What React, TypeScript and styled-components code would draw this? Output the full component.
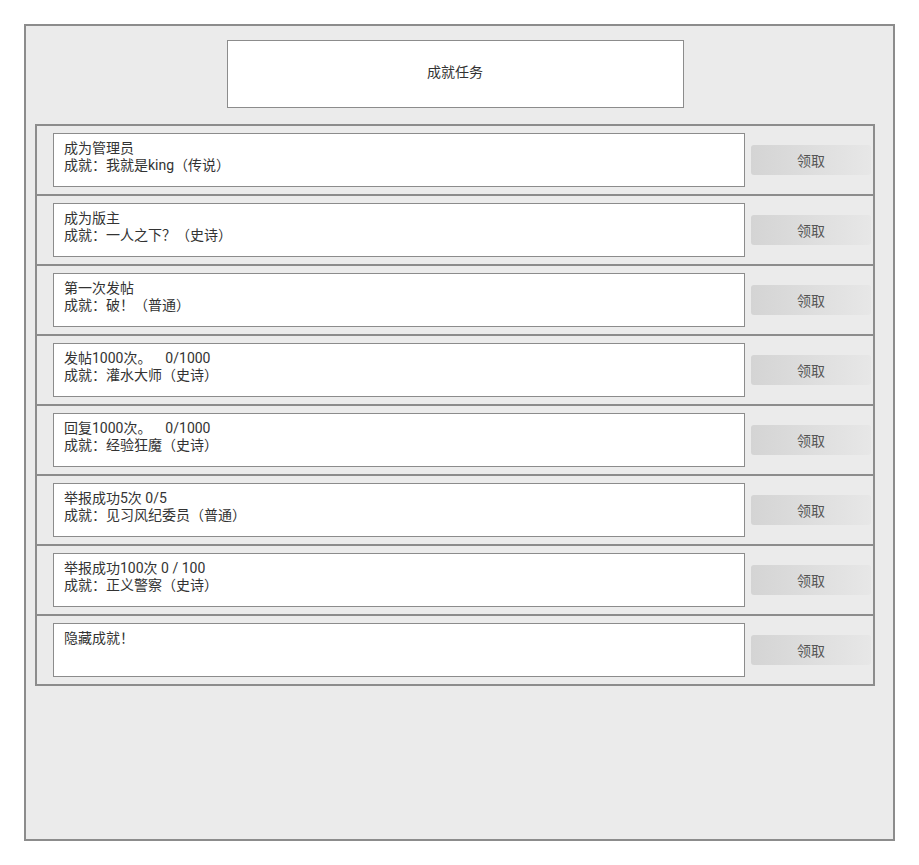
import React from "react";
import styled, { createGlobalStyle } from "styled-components";

const GlobalStyle = createGlobalStyle`
  html, body {
    margin: 0;
    padding: 0;
    background: #ffffff;
  }
  body {
    font-family: Roboto, "Noto Sans CJK SC", sans-serif;
    font-size: 14px;
    color: #333333;
  }
`;

const Page = styled.div`
  padding: 24px;
`;

const Frame = styled.div`
  box-sizing: border-box;
  width: 871px;
  height: 817px;
  border: 2px solid #8c8c8c;
  background: #ebebeb;
  padding: 14px 0 0 9px;
`;

const Column = styled.div`
  width: 840px;
  display: flex;
  flex-direction: column;
  align-items: center;
  gap: 16px;
`;

const TitleBox = styled.div`
  box-sizing: border-box;
  width: 457px;
  height: 68px;
  border: 1px solid #8c8c8c;
  background: #ffffff;
  display: flex;
  align-items: center;
  justify-content: center;
  padding-bottom: 7px;
  font-size: 14px;
  color: #333333;
`;

const List = styled.div`
  box-sizing: border-box;
  width: 840px;
  border: 2px solid #8c8c8c;
  display: flex;
  flex-direction: column;
`;

const Row = styled.div`
  box-sizing: border-box;
  height: 70px;
  padding: 7px 2px 7px 16px;
  display: flex;
  align-items: center;
  gap: 6px;
  border-bottom: 2px solid #8c8c8c;
  &:last-child {
    height: 68px;
    border-bottom: none;
  }
`;

const TextBox = styled.div`
  box-sizing: border-box;
  width: 692px;
  height: 54px;
  border: 1px solid #8c8c8c;
  background: #ffffff;
  padding: 6px 10px;
  line-height: 17px;
  font-size: 14px;
  color: #333333;
  white-space: pre;
`;

const ClaimButton = styled.button`
  box-sizing: border-box;
  width: 120px;
  height: 30px;
  border: none;
  border-radius: 3px;
  background: linear-gradient(to right, #d4d4d4, #e7e7e7);
  color: #555555;
  font-family: Roboto, "Noto Sans CJK SC", sans-serif;
  font-size: 14px;
  padding: 0;
  cursor: pointer;
`;

const tasks: string[][] = [
  ["成为管理员", "成就：我就是king（传说）"],
  ["成为版主", "成就：一人之下？（史诗）"],
  ["第一次发帖", "成就：破！（普通）"],
  ["发帖1000次。    0/1000", "成就：灌水大师（史诗）"],
  ["回复1000次。    0/1000", "成就：经验狂魔（史诗）"],
  ["举报成功5次 0/5", "成就：见习风纪委员（普通）"],
  ["举报成功100次 0 / 100", "成就：正义警察（史诗）"],
  ["隐藏成就！"],
];

export default function App() {
  return (
    <>
      <GlobalStyle />
      <Page>
        <Frame>
          <Column>
            <TitleBox>成就任务</TitleBox>
            <List>
              {tasks.map((lines, i) => (
                <Row key={i}>
                  <TextBox>
                    {lines.map((l, j) => (
                      <div key={j}>{l}</div>
                    ))}
                  </TextBox>
                  <ClaimButton>领取</ClaimButton>
                </Row>
              ))}
            </List>
          </Column>
        </Frame>
      </Page>
    </>
  );
}
